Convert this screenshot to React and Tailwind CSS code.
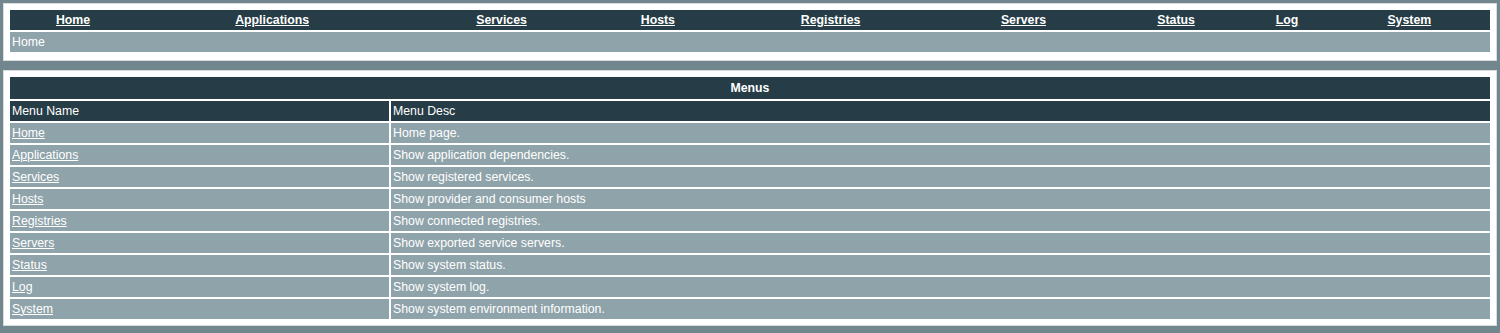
const NAV = ['Home', 'Applications', 'Services', 'Hosts', 'Registries', 'Servers', 'Status', 'Log', 'System']

const MENUS = [
  ['Home', 'Home page.'],
  ['Applications', 'Show application dependencies.'],
  ['Services', 'Show registered services.'],
  ['Hosts', 'Show provider and consumer hosts'],
  ['Registries', 'Show connected registries.'],
  ['Servers', 'Show exported service servers.'],
  ['Status', 'Show system status.'],
  ['Log', 'Show system log.'],
  ['System', 'Show system environment information.'],
]

export default function App() {
  return (
    <div className="min-h-[333px] bg-[#71878d] px-[3px] pt-[3px] pb-2 font-['Liberation_Sans',Arial,sans-serif] text-[12.3px] text-white">
      {/* Top navigation */}
      <div className="bg-white border border-[#d8dcdd] px-1 pt-1 pb-[6px]">
        <table className="w-full border-separate border-spacing-[2px]">
          <tbody>
            <tr className="h-5 bg-[#263c46]">
              <td className="p-0">
                <table className="w-full border-collapse">
                  <tbody>
                    <tr>
                      {NAV.map((n) => (
                        <td key={n} className="text-center font-bold p-0">
                          <a href="#" className="underline">{n}</a>
                        </td>
                      ))}
                    </tr>
                  </tbody>
                </table>
              </td>
            </tr>
            <tr className="h-5 bg-[#8fa3aa]">
              <td className="px-[2px] py-0">Home</td>
            </tr>
          </tbody>
        </table>
      </div>

      {/* Menus table */}
      <div className="mt-[9px] bg-white border border-[#d8dcdd] p-1">
        <table className="w-full border-separate border-spacing-[2px]">
          <tbody>
            <tr className="h-[22px] bg-[#263c46]">
              <td colSpan={2} className="text-center font-bold p-0">Menus</td>
            </tr>
            <tr className="h-5 bg-[#263c46]">
              <td className="w-[379px] px-[2px] py-0">Menu Name</td>
              <td className="px-[2px] py-0">Menu Desc</td>
            </tr>
            {MENUS.map(([name, desc]) => (
              <tr key={name} className="h-5 bg-[#8fa3aa]">
                <td className="px-[2px] py-0">
                  <a href="#" className="underline">{name}</a>
                </td>
                <td className="px-[2px] py-0">{desc}</td>
              </tr>
            ))}
          </tbody>
        </table>
      </div>
    </div>
  )
}
